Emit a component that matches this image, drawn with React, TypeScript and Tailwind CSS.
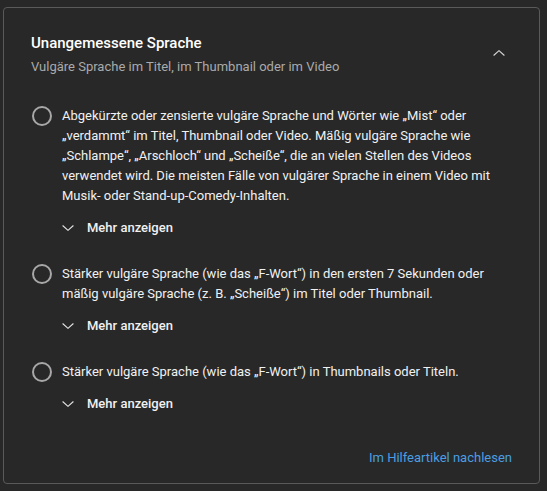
type Option = { id: string; text: string }

const options: Option[] = [
  {
    id: 'mild',
    text: 'Abgekürzte oder zensierte vulgäre Sprache und Wörter wie „Mist“ oder „verdammt“ im Titel, Thumbnail oder Video. Mäßig vulgäre Sprache wie „Schlampe“, „Arschloch“ und „Scheiße“, die an vielen Stellen des Videos verwendet wird. Die meisten Fälle von vulgärer Sprache in einem Video mit Musik- oder Stand-up-Comedy-Inhalten.',
  },
  {
    id: 'moderate',
    text: 'Stärker vulgäre Sprache (wie das „F-Wort“) in den ersten 7 Sekunden oder mäßig vulgäre Sprache (z. B. „Scheiße“) im Titel oder Thumbnail.',
  },
  {
    id: 'strong',
    text: 'Stärker vulgäre Sprache (wie das „F-Wort“) in Thumbnails oder Titeln.',
  },
]

function Chevron({ up = false, className = '' }: { up?: boolean; className?: string }) {
  return (
    <svg width="12" height="6" viewBox="0 0 12 6" fill="none" className={className}>
      <path
        d={up ? 'M0.6 5.5 L6 0.7 L11.4 5.5' : 'M0.6 0.5 L6 5.3 L11.4 0.5'}
        stroke="currentColor"
        strokeWidth="1.1"
      />
    </svg>
  )
}

function OptionRow({ option }: { option: Option }) {
  return (
    <div className="flex items-start gap-[10px]">
      <div className="h-5 w-5 shrink-0 rounded-full border-2 border-[#a8a8a8]" />
      <div className="flex flex-col">
        <p className="text-[13px] leading-5 text-[#f1f1f1]">{option.text}</p>
        <button className="mt-1 flex h-9 items-center gap-[13px] text-left">
          <Chevron className="text-[#e6e6e6]" />
          <span className="text-[13px] font-medium text-[#f1f1f1]">Mehr anzeigen</span>
        </button>
      </div>
    </div>
  )
}

export default function App() {
  return (
    <div className="min-h-[491px] bg-[#282828] pl-[3px] pr-[7px] pt-[7px] pb-[7px] font-['Roboto',sans-serif]">
      <div className="flex h-[477px] flex-col rounded-[4px] border border-[#5a5a5a] bg-[#282828]">
        {/* Header */}
        <div className="flex items-start justify-between pl-[27px] pr-[34px] pt-[24px]">
          <div>
            <h2 className="text-[15px] font-medium leading-[22px] text-white">Unangemessene Sprache</h2>
            <p className="mt-[3px] text-[13px] leading-5 text-[#aaaaaa]">
              Vulgäre Sprache im Titel, im Thumbnail oder im Video
            </p>
          </div>
          <Chevron up className="mt-[18px] text-[#d8d8d8]" />
        </div>

        {/* Options */}
        <div className="mt-[29px] flex flex-col gap-[18px] pl-[28px] pr-[30px]">
          {options.map((o) => (
            <OptionRow key={o.id} option={o} />
          ))}
        </div>

        <div className="mt-auto flex justify-end pb-[15px] pr-[27px]">
          <a className="text-[13px] leading-5 text-[#4a9ee4]">Im Hilfeartikel nachlesen</a>
        </div>
      </div>
    </div>
  )
}
